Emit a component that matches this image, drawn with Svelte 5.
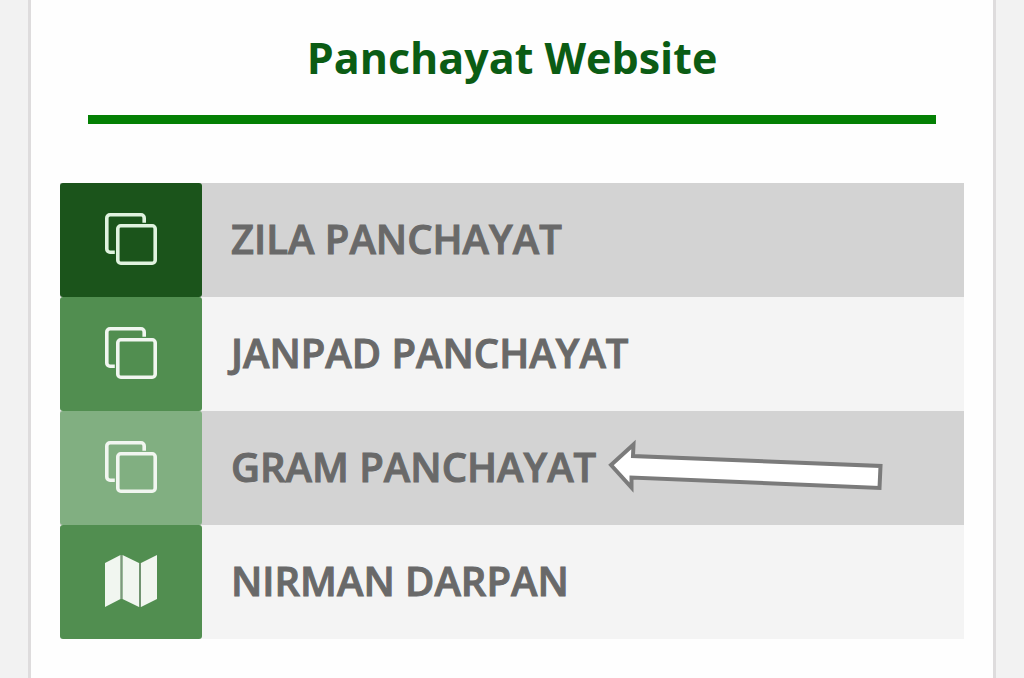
<script lang="ts">
  interface Item {
    label: string;
    icon: "copy" | "map";
    tone: string;
    marked?: boolean;
  }

  const items: Item[] = [
    { label: "ZILA PANCHAYAT", icon: "copy", tone: "dark" },
    { label: "JANPAD PANCHAYAT", icon: "copy", tone: "mid" },
    { label: "GRAM PANCHAYAT", icon: "copy", tone: "light", marked: true },
    { label: "NIRMAN DARPAN", icon: "map", tone: "mid" }
  ];
</script>

<main class="panel">
  <header class="panel-header">
    <h1 class="panel-title">Panchayat Website</h1>
  </header>

  <nav class="links" aria-label="Panchayat Website">
    {#each items as item}
      <a href="#top" class="link">
        <span class="link-icon {item.tone}">
          {#if item.icon === "copy"}
            <svg width="52" height="52" viewBox="0 0 52 52" fill="none" stroke="currentColor" stroke-width="3.6">
              <rect x="12.8" y="12.8" width="37.4" height="37.4" rx="3" />
              <path d="M39.2 9.8V5a3.2 3.2 0 0 0-3.2-3.2H5A3.2 3.2 0 0 0 1.8 5v31A3.2 3.2 0 0 0 5 39.2h4.8" />
            </svg>
          {:else}
            <svg width="52" height="52" viewBox="0 0 52 52" fill="currentColor">
              <path d="M0 8L15.5 0v44L0 52zM17.5 0L34 8v44l-16.5-8zM36 8l16-8v44l-16 8z" />
              <path d="M16.5 0v44M35 8v44" stroke="#7f967f" stroke-width="1.4" />
            </svg>
          {/if}
        </span>
        <span class="link-label">
          {item.label}
          {#if item.marked}
            <svg class="pointer" width="280" height="60" viewBox="0 0 280 60" aria-hidden="true">
              <path d="M7 28L29.5 7.5L29 19L276.5 29L275.5 51L27.5 40.5L27.5 50.5Z" />
            </svg>
          {/if}
        </span>
      </a>
    {/each}
  </nav>
</main>

<style>
  :global(body) {
    background: #f2f2f2;
  }
  .panel {
    min-height: 100vh;
    box-sizing: border-box;
    margin: 0 28px;
    padding: 28px 29px 40px;
    border: solid #dedcdd;
    border-width: 0 3px;
    background: #fefefe;
    font-family: "Open Sans", "Noto Sans", sans-serif;
  }
  .panel-header {
    margin: 0 28px 59px;
    border-bottom: 9px solid #048004;
  }
  .panel-title {
    margin: 0;
    padding-bottom: 27px;
    color: #0b5c14;
    font-size: 43px;
    line-height: 60px;
    font-weight: 700;
    text-align: center;
  }
  .links {
    display: flex;
    flex-direction: column;
  }
  .link {
    display: flex;
    height: 114px;
    background: #f4f4f4;
    color: #696969;
    text-decoration: none;
  }
  .link:nth-child(odd) {
    background: #d3d3d3;
  }
  .link-icon {
    display: flex;
    flex: none;
    align-items: center;
    justify-content: center;
    width: 142px;
    padding-bottom: 2px;
    border-radius: 3px;
    color: #f1f6f0;
  }
  .link-icon.dark {
    background: #1b541b;
    color: #e0f3df;
  }
  .link-icon.mid {
    background: #518e50;
  }
  .link-icon.light {
    background: #81af81;
  }
  .link-label {
    position: relative;
    align-self: center;
    margin-left: 29px;
    padding-bottom: 2px;
    font-size: 40px;
    line-height: 60px;
    font-weight: 600;
    -webkit-text-stroke: 1px currentColor;
    white-space: nowrap;
  }
  .pointer {
    position: absolute;
    top: 0;
    left: 100%;
    margin-left: 8px;
    fill: #fff;
    stroke: #7b7b7b;
    stroke-width: 4;
  }
</style>
